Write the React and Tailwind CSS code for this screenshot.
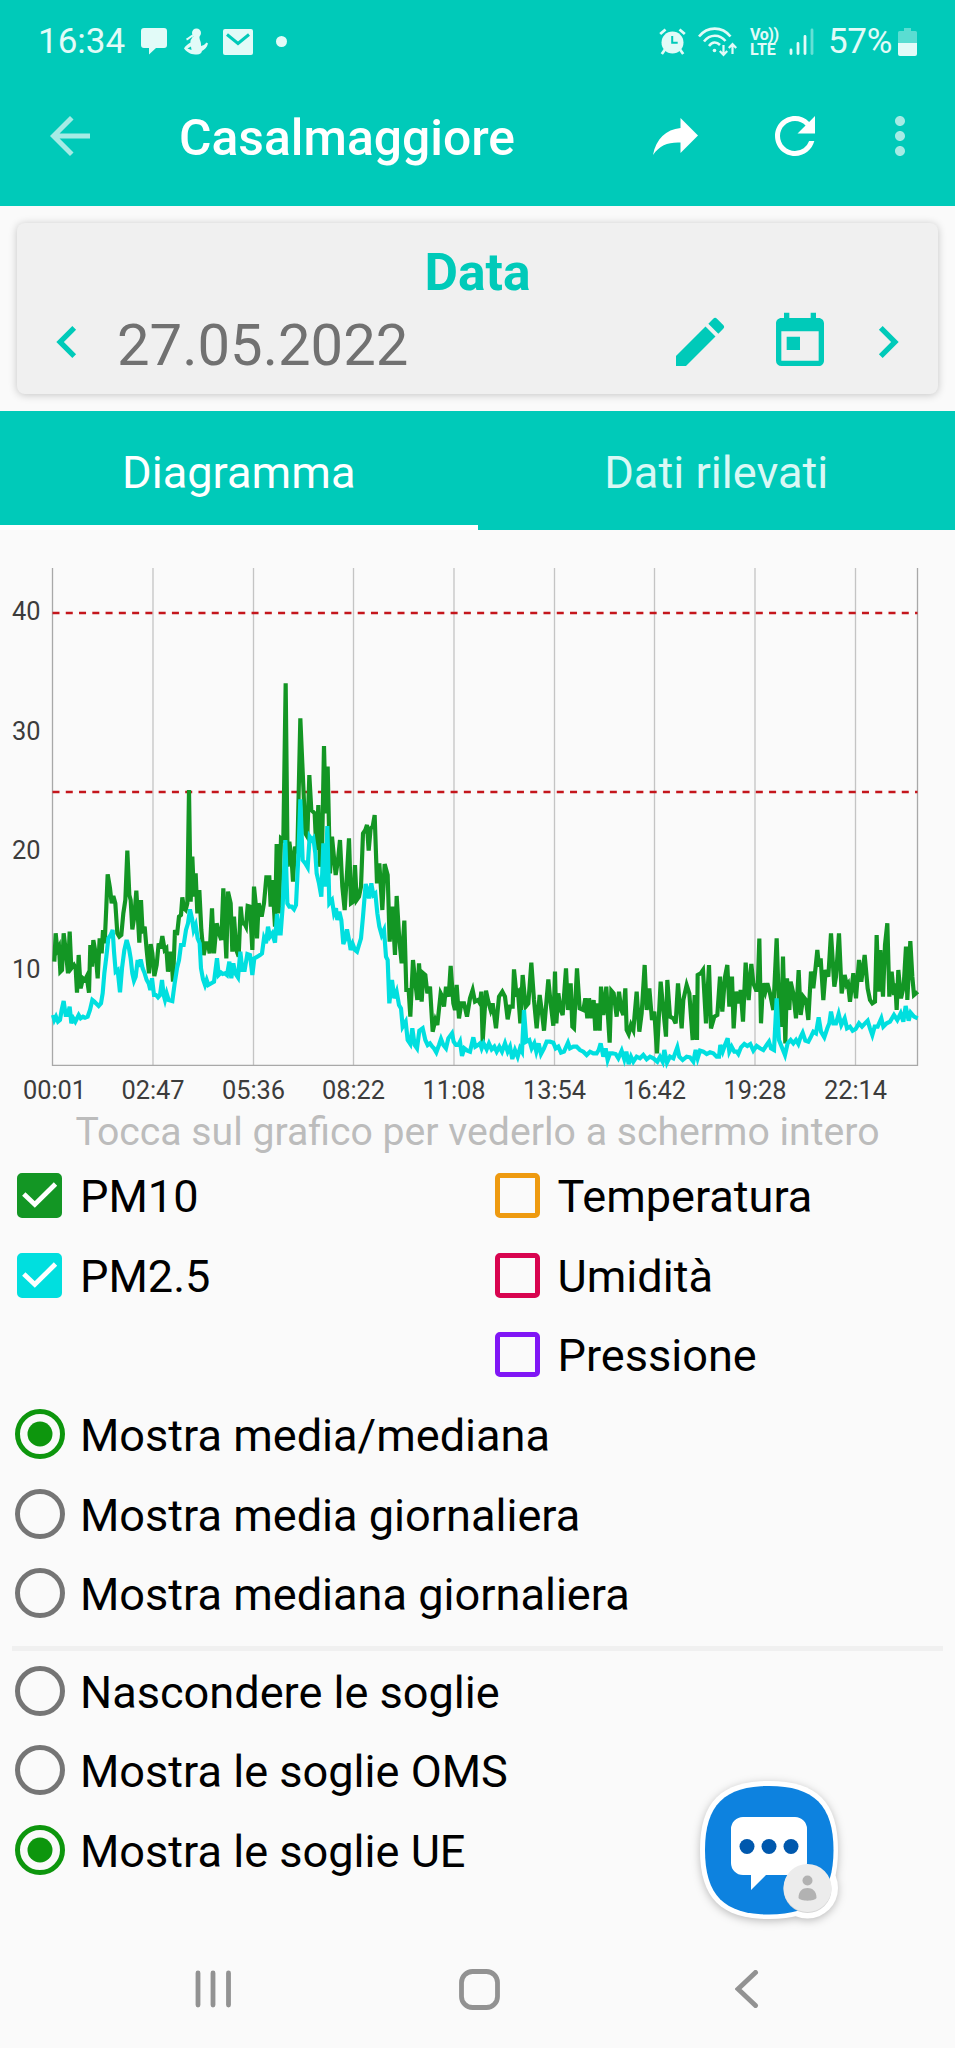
import { useState } from 'react';
import { MdArrowBack, MdRefresh, MdMoreVert, MdEdit, MdToday, MdChevronLeft, MdChevronRight } from 'react-icons/md';

// samples are stored at a third of a pixel, the chart group scales them down
const PM10 = `
163,965 167,880 172,930 177,920 181,995 186,990 191,880 197,930 204,1000 209,875 214,985 222,975 227,985 231,1058 236,945 242,1045
249,1015 255,1020 260,1010 267,1058 271,915 276,980 280,900 287,940 293,1015 299,895 305,940 309,870 314,910 319,800 323,703 330,745
335,790 340,768 346,790 352,880 358,890 364,885 370,820 376,780 382,632 388,765 392,780 397,868 403,830 409,752 413,820 418,908
423,780 428,880 434,860 440,930 447,1000 452,912 457,940 463,1008 470,975 476,910 481,925 487,888 494,930 499,925 504,995 511,935
515,960 519,1025 525,870 531,885 537,830 543,825 547,772 552,805 557,810 562,790 567,450 572,785 577,650 582,770 587,700 592,820
598,750 604,870 611,945 618,910 624,910 629,940 636,805 642,940 650,850 657,880 664,900 670,745 674,850 679,955 684,755 692,790
697,935 702,830 709,930 716,950 722,800 727,850 733,850 738,860 743,798 750,800 757,930 762,740 768,800 771,895 776,790 785,830
792,790 799,712 808,712 812,800 817,720 825,860 830,612 837,820 843,595 850,600 857,130 863,680 868,605 875,660 879,725 885,620
892,640 901,235 910,440 916,580 922,590 928,405 934,510 944,520 949,630 955,495 960,680 966,640 972,318 977,520 983,380 990,700
996,590 1007,705 1014,660 1020,600 1027,740 1034,810 1041,700 1047,595 1053,790 1060,785 1065,675 1070,780 1077,770 1083,740
1089,580 1096,570 1101,555 1106,632 1112,565 1118,560 1124,525 1131,730 1138,670 1147,810 1154,672 1163,705 1169,905 1177,800
1185,945 1190,768 1198,900 1205,970 1213,842 1219,1050 1226,1050 1231,1130 1239,960 1245,1020 1252,1080 1257,970 1265,1085
1270,1000 1276,1005 1282,1060 1290,1040 1298,1175 1306,1140 1312,1155 1322,1060 1327,1070 1332,1100 1338,1040 1346,1070 1352,978
1360,1090 1365,1110 1370,1035 1377,1135 1384,1090 1392,1090 1401,1130 1410,1075 1418,1050 1425,1085 1434,1080 1440,1090
1444,1055 1448,1205 1458,1052 1465,1085 1472,1110 1478,1090 1488,1165 1497,1070 1507,1055 1515,1070 1523,1138 1530,1100 1538,1100
1542,988 1549,1060 1554,1055 1561,1150 1568,1005 1577,1100 1585,1090 1594,968 1602,1080 1610,1165 1619,1065 1625,1110 1632,1172
1638,1100 1645,1018 1652,1090 1660,1157 1665,995 1669,1150 1675,1060 1682,1110 1688,1125 1698,985 1704,1110 1712,1030 1717,1160
1722,1165 1731,985 1739,1105 1750,1110 1756,1075 1762,1135 1767,1075 1775,1135 1781,1080 1786,1172 1792,1090 1799,1172 1803,1040
1810,1125 1819,1040 1824,1130 1829,1208 1834,1052 1841,1060 1850,1130 1857,1055 1864,1110 1870,1125 1876,1045 1880,1170 1886,1182
1893,1155 1900,1170 1910,1055 1918,1175 1925,1120 1934,975 1940,1110 1948,1045 1956,1140 1963,1115 1971,1240 1982,1025 1990,1110
1998,1190 2002,1020 2010,1130 2020,1135 2027,1150 2034,1030 2045,1165 2050,1080 2060,1035 2068,1060 2078,1200 2084,1065 2091,1200
2093,1005 2102,1000 2109,990 2118,1150 2127,975 2133,1165 2143,1130 2152,1125 2160,1010 2167,1115 2175,1010 2182,975 2188,1100
2196,1010 2201,1165 2208,1055 2215,1090 2222,1050 2229,1145 2237,968 2246,1080 2254,972 2260,1030 2268,1050 2273,1050 2278,896
2283,1150 2289,1030 2296,1055 2302,1030 2310,1060 2320,1110 2330,895 2337,1100 2344,1160 2349,950 2356,1210 2361,1015 2368,1110
2372,1025 2380,1060 2388,1135 2396,990 2402,1125 2410,1070 2418,1080 2425,1140 2433,995 2440,1045 2447,980 2452,930 2457,980
2462,955 2470,1080 2477,990 2485,1010 2493,880 2503,1040 2508,1010 2517,880 2525,1060 2534,1005 2540,1035 2544,1030 2550,1085
2560,1000 2568,1075 2577,960 2584,1025 2594,945 2603,1045 2610,1080 2617,1090 2625,1085 2630,885 2636,1055 2641,930 2649,1070
2655,915 2662,850 2668,1070 2675,995 2682,1065 2686,1030 2690,1110 2695,990 2703,1075 2711,1040 2718,920 2722,1080 2731,903
2737,1010 2742,1065 2748,1060 2753,1055`;

const PM25 = `
159,1125 163,1140 168,1130 174,1145 180,1140 185,1110 191,1083 197,1125 203,1125 209,1100 214,1150 220,1135 226,1145 236,1125
242,1135 249,1130 255,1133 263,1130 270,1110 277,1080 283,1085 290,1092 296,1098 303,1090 308,1060 313,1000 319,950 325,895
332,885 338,870 342,935 347,995 353,990 360,1057 366,985 373,930 380,900 387,925 392,955 397,1000 402,1022 407,1010 413,960
418,980 422,958 428,985 434,1000 440,1020 446,1030 451,1050 456,1015 462,1065 468,1065 474,1072 480,1065 486,1020 491,1065
495,1080 500,1060 506,1080 517,1083 524,1030 531,985 537,960 543,915 551,915 558,870 564,850 570,808 576,835 581,870 587,855
593,895 599,910 603,985 609,1018 615,1035 620,1020 625,1035 634,1030 642,1025 651,955 656,1005 663,998 668,1002 675,1000
681,1005 688,965 694,1015 700,970 706,1000 714,1012 721,935 727,990 734,990 742,942 750,945 757,1005 763,955 772,950 780,945
786,940 792,895 798,910 804,860 810,890 817,880 825,908 831,822 837,880 842,880 848,800 856,600 862,790 868,800 875,800 882,808
888,795 895,650 901,478 908,660 916,670 923,682 929,590 936,600 940,595 946,640 950,700 957,730 964,770 970,610 976,740 982,558
988,790 996,780 1002,820 1008,805 1012,840 1018,815 1024,840 1030,912 1035,900 1041,868 1048,905 1052,930 1058,912 1065,930
1071,935 1077,915 1083,895 1089,830 1097,732 1102,750 1107,775 1114,730 1120,765 1126,760 1132,820 1138,860 1145,885 1152,870
1158,950 1163,960 1168,1090 1176,1020 1183,1075 1190,1055 1197,1095 1203,1105 1208,1160 1217,1145 1223,1200 1231,1212 1237,1165
1244,1215 1251,1225 1258,1172 1268,1165 1276,1200 1283,1215 1290,1210 1297,1220 1302,1225 1309,1237 1317,1215 1323,1197
1330,1215 1338,1225 1345,1195 1356,1180 1361,1205 1368,1215 1375,1215 1380,1205 1386,1248 1393,1225 1402,1232 1410,1235
1420,1192 1426,1220 1434,1215 1440,1210 1445,1225 1451,1210 1460,1228 1467,1210 1475,1228 1483,1220 1490,1235 1498,1220
1506,1235 1515,1210 1523,1235 1530,1220 1537,1257 1545,1230 1553,1250 1560,1225 1566,1235 1572,1110 1579,1205 1588,1200
1595,1225 1603,1210 1609,1235 1616,1210 1623,1242 1632,1225 1640,1205 1650,1205 1660,1208 1667,1225 1675,1220 1683,1238
1692,1235 1704,1208 1710,1225 1720,1220 1730,1220 1740,1230 1750,1235 1760,1245 1770,1235 1780,1240 1790,1240 1796,1230
1802,1210 1810,1250 1817,1225 1823,1260 1830,1240 1838,1240 1847,1242 1855,1255 1865,1232 1873,1258 1879,1235 1886,1272
1893,1250 1900,1265 1910,1250 1920,1255 1930,1245 1940,1258 1950,1250 1960,1255 1972,1265 1980,1250 1988,1265 1993,1230
2001,1268 2010,1250 2020,1255 2032,1222 2038,1250 2048,1260 2060,1250 2070,1252 2080,1265 2087,1230 2093,1255 2100,1232
2110,1235 2120,1242 2130,1237 2140,1240 2150,1250 2157,1250 2161,1215 2168,1235 2175,1215 2183,1195 2188,1235 2195,1220
2203,1235 2210,1235 2215,1242 2223,1222 2233,1212 2242,1218 2251,1212 2260,1232 2270,1218 2280,1225 2290,1230 2300,1215
2307,1205 2313,1225 2322,1230 2330,1075 2337,1200 2345,1220 2355,1245 2363,1210 2372,1200 2380,1210 2388,1200 2395,1212
2402,1190 2408,1178 2416,1202 2425,1205 2433,1190 2440,1175 2448,1180 2456,1132 2463,1175 2473,1192 2482,1165 2488,1150
2493,1115 2500,1150 2508,1150 2516,1122 2524,1155 2534,1135 2541,1165 2550,1160 2558,1172 2567,1167 2577,1150 2586,1160
2595,1150 2603,1142 2610,1165 2617,1185 2624,1160 2633,1160 2644,1135 2650,1160 2660,1150 2670,1145 2682,1125 2692,1140
2702,1120 2710,1145 2717,1098 2726,1142 2732,1118 2742,1130 2753,1135`;

const TIMES = [
    { x: 54.5, label: '00:01' },
    { x: 153, label: '02:47' },
    { x: 253.5, label: '05:36' },
    { x: 353.5, label: '08:22' },
    { x: 454, label: '11:08' },
    { x: 554.5, label: '13:54' },
    { x: 654.5, label: '16:42' },
    { x: 755, label: '19:28' },
    { x: 855.5, label: '22:14' },
];

const LEVELS = [
    { y: 52, label: '40' },
    { y: 171.5, label: '30' },
    { y: 291, label: '20' },
    { y: 410, label: '10' },
];

const AVERAGES = ['Mostra media/mediana', 'Mostra media giornaliera', 'Mostra mediana giornaliera'];
const THRESHOLDS = ['Nascondere le soglie', 'Mostra le soglie OMS', 'Mostra le soglie UE'];

function StatusBar() {
    return (
        <div className="h-[83px] flex items-center pl-[38px] pr-[38px] text-[#e2fbf8] text-[35px] leading-none">
            <span className="w-[103px]">16:34</span>
            <svg width="26" height="27" viewBox="0 0 26 27" fill="currentColor" className="shrink-0">
                <path d="M3 0h20a3 3 0 0 1 3 3v14a3 3 0 0 1-3 3h-8l-7 6.500V20H3a3 3 0 0 1-3-3V3a3 3 0 0 1 3-3z" />
            </svg>
            <svg width="24" height="27" viewBox="0 0 24 27" fill="currentColor" className="ml-[17px] shrink-0">
                <circle cx="12.500" cy="5" r="4.500" />
                <path d="M8.500 8.500h7c-.5 3 2 5 1.500 9.500 2-.3 4-1.500 5.500-3.500l1.500 1c-1 4-3.500 6-6 7.500-.5 2-2 3.500-5 3.500-5 0-9-1-13-6 1-2.500 4-4.500 6.500-6-.5-3 2-4 2-6z" />
                <path d="M2.500 11.500C5 10.500 6 8.500 9 7.500" fill="none" stroke="currentColor" strokeWidth="2" />
                <path d="M3.500 20.500l3.500-2 .5 3.500z" fill="#00cab9" />
            </svg>
            <svg width="30" height="26" viewBox="0 0 30 26" className="ml-[15px] shrink-0">
                <rect width="30" height="26" rx="2" fill="currentColor" />
                <path d="M4 5.500L15 14.500 26 5.500" fill="none" stroke="#00cab9" strokeWidth="3" />
            </svg>
            <span className="ml-[23px] w-[11px] h-[11px] rounded-full bg-current" />

            <div className="ml-auto flex items-center">
                <svg width="27" height="27" viewBox="0 0 27 27" fill="none" stroke="currentColor" className="shrink-0">
                    <circle cx="13.500" cy="14.500" r="11" fill="currentColor" stroke="none" />
                    <path d="M1.200 6L6.500 1.500M25.800 6L20.500 1.500M6 21.500L2.800 26M21 21.500L24.200 26" strokeWidth="2.800" />
                    <path d="M13.200 8v6.800h5.500" stroke="#00cab9" strokeWidth="2" />
                </svg>
                <svg width="39" height="30" viewBox="0 0 39 30" fill="none" stroke="currentColor" strokeWidth="2.600" className="ml-[12px] shrink-0">
                    <path d="M1 9.500C9.500-1 24-1 32.500 9.500" />
                    <path d="M6 14.500C12 7 21.500 7 27.500 14" />
                    <path d="M11 19C14.500 14.500 18.500 14.500 22 18" />
                    <circle cx="16.500" cy="23.500" r="1.800" fill="currentColor" stroke="none" />
                    <path d="M25.500 18v9M21.800 24l3.700 4 3.700-4M34.500 27v-9M30.800 21l3.700-4 3.700 4" strokeWidth="2.200" />
                </svg>
                <div className="ml-[13px] w-[30px] text-[16px] leading-[15px] font-bold whitespace-nowrap">
                    <div className="tracking-[-0.4px]">Vo))</div>
                    <div>LTE</div>
                </div>
                <svg width="25" height="27" viewBox="0 0 25 27" stroke="currentColor" strokeWidth="2.800" strokeLinecap="round" className="ml-[9px] shrink-0">
                    <path d="M2 22v3.500M9 15.500v10M16 8.500v17" />
                    <path d="M23 2v23.500" opacity=".45" />
                </svg>
                <span className="ml-[14px] w-[67px] tracking-[-0.3px]">57%</span>
                <svg width="19" height="28" viewBox="0 0 19 28" fill="currentColor" className="ml-[3px] shrink-0">
                    <path d="M6 0h7v3h4.500A1.500 1.500 0 0 1 19 4.500V15H0V4.500A1.500 1.500 0 0 1 1.500 3H6z" opacity=".4" />
                    <path d="M0 15h19v11a2 2 0 0 1-2 2H2a2 2 0 0 1-2-2z" />
                </svg>
            </div>
        </div>
    );
}

function AppBar() {
    return (
        <div className="h-[106px] flex items-center pl-[40px] pr-[25px] text-white">
            <MdArrowBack className="size-[60px] text-[#a6ebe5]" />
            <h1 className="ml-[79px] text-[49.8px] font-medium leading-none pt-[5px]">Casalmaggiore</h1>
            <svg width="45" height="37" viewBox="0 0 45 37" fill="currentColor" className="ml-auto">
                <path d="M27.500 0L45 17.500 27.500 35V24.500C15 24 7 27 0 37 3 21 13 11.500 27.500 10z" />
            </svg>
            <MdRefresh className="size-[60px] ml-[67px]" />
            <MdMoreVert className="size-[60px] ml-[45px] text-[#a6ebe5]" />
        </div>
    );
}

function DateCard() {
    return (
        <div className="h-[205px] pt-[17px] px-[17px]">
            <div className="h-[171px] rounded-[8px] bg-[#f0f0f0] shadow-[0_1px_8px_rgba(0,0,0,0.22)] flex flex-col">
                <h2 className="mt-[23px] h-[54px] text-center text-[51.5px] leading-[54px] font-bold text-[#00cab9]">Data</h2>
                <div className="mt-[10px] h-[64px] flex items-center pl-[18px] pr-[18px] text-[#00cab9]">
                    <MdChevronLeft className="size-[64px]" />
                    <span className="ml-[18px] text-[58px] leading-none text-[#717171] pt-[5px]">27.05.2022</span>
                    <MdEdit className="size-[64px] ml-auto" />
                    <MdToday className="size-[64px] ml-[36px]" />
                    <MdChevronRight className="size-[64px] ml-[24px]" />
                </div>
            </div>
        </div>
    );
}

function Tabs({ tab, onChange }) {
    return (
        <div className="h-[119px] grid grid-cols-2 bg-[#00cab9] text-[45.2px]">
            {['Diagramma', 'Dati rilevati'].map((name, i) => (
                <button
                    key={name}
                    onClick={() => onChange(i)}
                    className={`pt-[9px] border-b-[5px] ${tab === i ? 'text-white border-white' : 'text-[#d9f8f5] border-transparent'}`}
                >
                    {name}
                </button>
            ))}
        </div>
    );
}

function Chart() {
    return (
        <svg width="955" height="542" viewBox="0 0 955 542" className="block mt-[38px] shrink-0" fontSize="25.4" fill="#3c3c3c">
            {TIMES.slice(1).map((t) => (
                <path key={t.label} d={`M${t.x} 0V497`} stroke="#c4c4c4" strokeWidth="1.300" />
            ))}
            <path d="M52.500 0V497.300H917.500V0" fill="none" stroke="#a8a8a8" strokeWidth="1.300" />
            <path d="M52.500 45H917.500M52.500 224H917.500" stroke="#c4161c" strokeWidth="2.600" strokeDasharray="7 6.270" />
            <g transform="translate(0 72) scale(0.33333)" fill="none" strokeWidth="12.500">
                <polyline points={PM10} stroke="#139624" />
                <polyline points={PM25} stroke="#00dfdf" />
            </g>
            {LEVELS.map((l) => (
                <text key={l.label} x="40.5" y={l.y} textAnchor="end">{l.label}</text>
            ))}
            {TIMES.map((t) => (
                <text key={t.label} x={t.x} y="531" textAnchor="middle">{t.label}</text>
            ))}
        </svg>
    );
}

function Check({ label, color, defaultOn = false }) {
    const [on, setOn] = useState(defaultOn);
    return (
        <div onClick={() => setOn(!on)} className="h-[79.5px] flex items-center">
            <svg width="45" height="45" viewBox="0 0 45 45" fill="none" className="shrink-0">
                <rect x="2.500" y="2.500" width="40" height="40" rx="2.500" stroke={color} strokeWidth="5" fill={on ? color : 'none'} />
                {on && <path d="M6.800 21L17.800 31.500 38.500 11" stroke="white" strokeWidth="4.800" />}
            </svg>
            <span className="ml-[18px] pt-[2px]">{label}</span>
        </div>
    );
}

function Radio({ label, on, onSelect }) {
    return (
        <div onClick={onSelect} className="h-[79.5px] flex items-center pl-[15px]">
            <svg width="50" height="50" viewBox="0 0 50 50" fill="none" className="shrink-0">
                <circle cx="25" cy="25" r="22.500" stroke={on ? '#0d960d' : '#757575'} strokeWidth="5" />
                {on && <circle cx="25" cy="25" r="12.500" fill="#0d960d" />}
            </svg>
            <span className="ml-[15px] pt-[3px]">{label}</span>
        </div>
    );
}

// floating messages bubble, stays above the page
function ChatHead() {
    return (
        <svg width="160" height="160" viewBox="0 0 160 160" className="absolute left-[690px] top-[1771px] drop-shadow-[0_2px_4px_rgba(0,0,0,0.25)]">
            <path d="M79 10C127 10 148 31 148 79S127 148 79 148 10 127 10 79 31 10 79 10z" fill="white" />
            <circle cx="117.500" cy="117" r="30.500" fill="white" />
            <path d="M79 15C124 15 143.500 34.500 143.500 79S124 143.500 79 143.500 15 124 15 79 34.500 15 79 15z" fill="#0d82df" />
            <path d="M53 46h52a12 12 0 0 1 12 12v34a12 12 0 0 1-12 12H76L61 119v-15h-8a12 12 0 0 1-12-12V58a12 12 0 0 1 12-12z" fill="white" />
            <g fill="#0058ad">
                <circle cx="57" cy="75.500" r="7.500" />
                <circle cx="79" cy="75.500" r="7.500" />
                <circle cx="101" cy="75.500" r="7.500" />
            </g>
            <circle cx="117.500" cy="118" r="24" fill="#d5d5d5" />
            <circle cx="117.500" cy="117" r="24" fill="#ececec" />
            <circle cx="117.500" cy="109.500" r="5" fill="#b2b2b2" />
            <path d="M108.500 127c0-7 4-10 9-10s9 3 9 10c-2 3.500-16 3.500-18 0z" fill="#b2b2b2" />
        </svg>
    );
}

function NavBar() {
    return (
        <div className="mt-auto h-[118px] flex items-center justify-between pl-[195px] pr-[196px] text-[#929292]">
            <svg width="36" height="38" viewBox="0 0 36 38" stroke="currentColor" strokeWidth="4.800" strokeLinecap="round">
                <path d="M3 3v32M18 3v32M33.500 3v32" />
            </svg>
            <svg width="41" height="41" viewBox="0 0 41 41" fill="none" stroke="currentColor" strokeWidth="4.800" className="mr-[7px]">
                <rect x="2.500" y="2.500" width="36" height="36" rx="11" />
            </svg>
            <svg width="24" height="38" viewBox="0 0 24 38" fill="none" stroke="currentColor" strokeWidth="5" strokeLinecap="round">
                <path d="M20.500 2.500L3 19l17.500 16.500" />
            </svg>
        </div>
    );
}

export default function App() {
    const [tab, setTab] = useState(0);
    const [average, setAverage] = useState(0);
    const [threshold, setThreshold] = useState(2);

    return (
        <div className="relative w-[955px] h-[2048px] overflow-hidden flex flex-col bg-[#fafafa] text-black font-['Roboto',sans-serif]">
            <header className="h-[206px] shrink-0 bg-[#00cab9]">
                <StatusBar />
                <AppBar />
            </header>
            <DateCard />
            <Tabs tab={tab} onChange={setTab} />
            <Chart />
            <p className="h-[46px] text-center text-[39.2px] leading-[45px] text-[#bcbcbc] whitespace-nowrap">
                Tocca sul grafico per vederlo a schermo intero
            </p>

            <div className="text-[45.1px] leading-none">
                <div className="grid grid-cols-2">
                    <div className="pl-[17px]">
                        <Check label="PM10" color="#139624" defaultOn />
                        <Check label="PM2.5" color="#00dfdf" defaultOn />
                    </div>
                    <div className="pl-[17px]">
                        <Check label="Temperatura" color="#ee9a10" />
                        <Check label="Umidità" color="#d8044f" />
                        <Check label="Pressione" color="#8016f5" />
                    </div>
                </div>
                {AVERAGES.map((label, i) => (
                    <Radio key={label} label={label} on={average === i} onSelect={() => setAverage(i)} />
                ))}
                <div className="mx-[12px] mt-[13px] h-[5px] bg-[#f0f0f0]" />
                {THRESHOLDS.map((label, i) => (
                    <Radio key={label} label={label} on={threshold === i} onSelect={() => setThreshold(i)} />
                ))}
            </div>

            <NavBar />
            <ChatHead />
        </div>
    );
}
